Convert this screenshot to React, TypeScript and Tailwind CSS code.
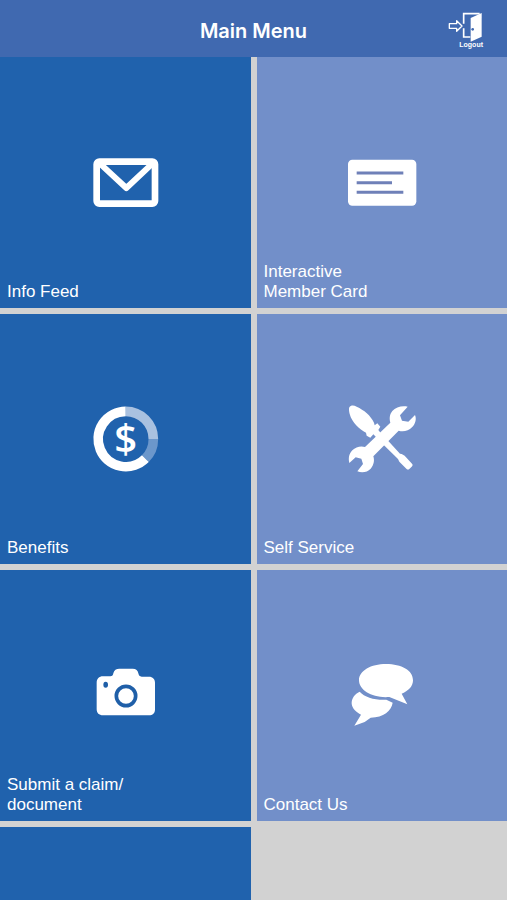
import type { ReactNode } from 'react'

interface MenuItem {
  label: string
  icon: ReactNode
}

function MailIcon() {
  return (
    <svg viewBox="27 3 216 216" className="size-18" fill="none" aria-hidden="true">
      <rect x="50" y="50" width="175" height="126" rx="8" stroke="white" strokeWidth="20" />
      <path d="M60 56 L139 129 L217 56" stroke="white" strokeWidth="18" strokeLinejoin="round" />
    </svg>
  )
}

function CardIcon() {
  return (
    <svg viewBox="30 3 216 216" className="size-18" fill="none" aria-hidden="true">
      <rect x="36" y="44" width="205" height="138" rx="13" fill="white" />
      <path d="M62 84H202M62 113H168M62 142H202" stroke="#6f80b8" strokeWidth="9" />
    </svg>
  )
}

function BenefitsIcon() {
  return (
    <svg viewBox="27 23 216 216" className="size-18" fill="none" aria-hidden="true">
      <g strokeWidth="29">
        <path d="M137 48A83 83 0 0 1 220 131" stroke="#a9c1e0" />
        <path d="M220 131A83 83 0 0 1 196 190" stroke="#6c97cb" />
        <path d="M196 190A83 83 0 1 1 137 48" stroke="white" />
      </g>
      <text
        x="137"
        y="173"
        textAnchor="middle"
        fill="white"
        className="font-['Open_Sans',sans-serif] text-[120px] font-semibold"
      >
        $
      </text>
    </svg>
  )
}

function ToolsIcon() {
  return (
    <svg viewBox="30 23 216 216" className="size-18" aria-hidden="true">
      {/* screwdriver */}
      <path
        fill="white"
        d="M40 36C44 30 52 29 62 34C84 44 104 60 114 82L116 90L124 84L133 94L127 104L134 113L157 137L192 175L197 176L206 181L228 205C231 208 230 211 227 214L220 221C217 224 214 223 211 220L190 199L186 191L147 153L125 130L112 117L103 127L92 121L90 112C70 102 48 82 41 56C39 48 38 40 40 36Z"
      />
      {/* wrench */}
      <path
        fill="white"
        d="M215 34C199 30 179 35 169 47C160 58 160 70 163 82L87 155C74 151 59 155 49 165C38 176 37 190 40 203L59 186L76 190L81 206L64 228C78 233 94 231 104 220C114 209 116 195 112 183L188 106C201 110 218 107 228 96C239 85 242 71 237 59L217 79L198 76L192 60Z"
      />
    </svg>
  )
}

function CameraIcon() {
  return (
    <svg viewBox="27 28 216 216" className="size-18" aria-hidden="true">
      <path
        fill="white"
        d="M69 80H91C97 80 99 77 100 71C102 61 109 57 118 57H158C168 57 174 62 175 71C176 77 179 81 185 81H207C218 81 225 88 225 99V179C225 191 218 197 207 197H69C57 197 50 190 50 179V99C50 88 57 80 69 80Z"
      />
      <circle cx="138" cy="139" r="29" fill="none" stroke="#1f5fa8" strokeWidth="11" />
      <ellipse cx="77" cy="105" rx="7" ry="9" fill="#1f5fa8" />
    </svg>
  )
}

function ChatIcon() {
  return (
    <svg viewBox="30 28 216 216" className="size-18" aria-hidden="true">
      <path
        fill="white"
        d="M150 43C197 43 231 62 231 92C231 109 219 123 197 132L214 164L160 142C110 146 69 122 69 92C69 63 105 43 150 43Z"
      />
      <path
        fill="white"
        d="M71 126C86 143 118 152 151 150L170 159C166 184 143 203 104 204L86 217L55 228L75 195C54 184 46 171 47 158C48 145 56 133 71 126Z"
      />
    </svg>
  )
}

function LogoutIcon() {
  return (
    <svg viewBox="57 37 105 90" className="h-[30px] w-[35px]" aria-hidden="true">
      <path
        d="M61 72H83V63L99 79L83 95V86H61Z"
        fill="none"
        stroke="white"
        strokeWidth="4"
        strokeLinejoin="round"
      />
      <path d="M104 72V42H152M104 86V112H124" fill="none" stroke="white" strokeWidth="5" />
      <path fill="white" d="M158 40V111L125 126V55Z" />
      <circle cx="131" cy="89" r="4" fill="#4069b0" />
    </svg>
  )
}

const menuItems: MenuItem[] = [
  { label: 'Info Feed', icon: <MailIcon /> },
  { label: 'Interactive Member Card', icon: <CardIcon /> },
  { label: 'Benefits', icon: <BenefitsIcon /> },
  { label: 'Self Service', icon: <ToolsIcon /> },
  { label: 'Submit a claim/ document', icon: <CameraIcon /> },
  { label: 'Contact Us', icon: <ChatIcon /> },
]

function MenuTile({ label, icon }: MenuItem) {
  return (
    <button
      type="button"
      className="grid aspect-square w-full bg-[#728fc9] text-left text-white odd:bg-[#2062ad]"
    >
      <span className="col-start-1 row-start-1 self-center justify-self-center">{icon}</span>
      <span className="col-start-1 row-start-1 max-w-[136px] self-end px-[7px] py-1.5 text-[17px] leading-5">
        {label}
      </span>
    </button>
  )
}

export default function App() {
  return (
    <div className="flex h-screen flex-col bg-[#d2d2d2] font-['Liberation_Sans',Arial,sans-serif]">
      <header className="grid shrink-0 grid-cols-[1fr_auto_1fr] items-center bg-[#4069b0] px-6 pt-3 pb-2 text-white">
        <h1 className="col-start-2 font-['Inter',sans-serif] text-xl font-semibold">Main Menu</h1>
        <button type="button" className="flex flex-col items-end justify-self-end">
          <LogoutIcon />
          <span className="-mt-[1px] text-[7px] leading-2 font-bold">Logout</span>
        </button>
      </header>

      <main className="min-h-0 flex-1 overflow-y-auto [scrollbar-width:none]">
        <div className="grid grid-cols-2 gap-1.5">
          {menuItems.map((item) => (
            <MenuTile key={item.label} {...item} />
          ))}
          <div className="aspect-square bg-[#2062ad]" />
        </div>
      </main>
    </div>
  )
}
